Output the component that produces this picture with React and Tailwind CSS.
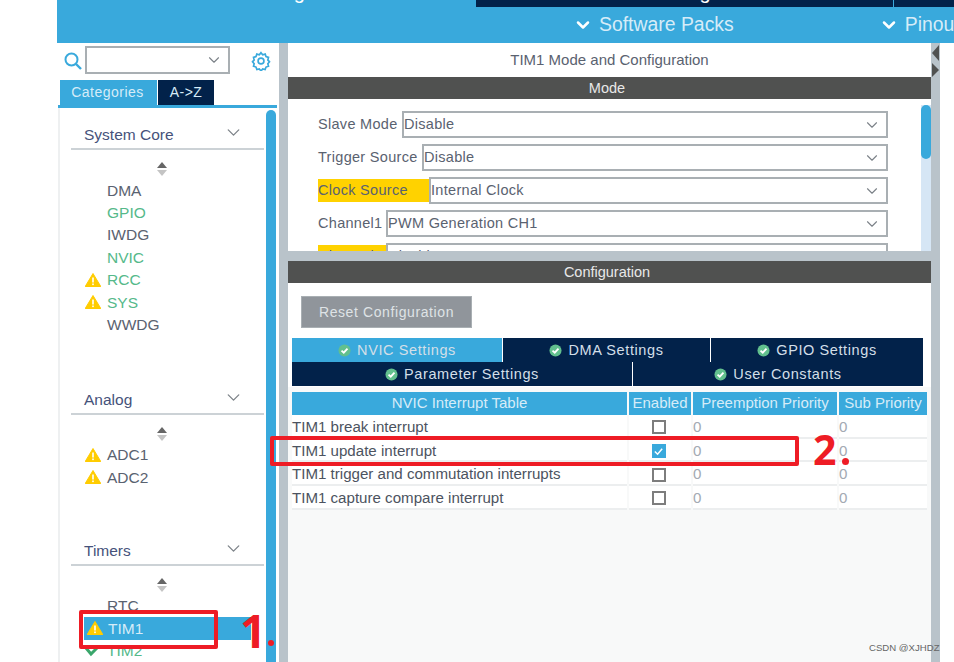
import React from "react";
import { ChevronDown } from "lucide-react";

const Warn = ({ className = "" }) => (
  <svg viewBox="0 0 16 14" className={`w-4 h-[14px] shrink-0 ${className}`}>
    <path d="M8 0.5 L15.8 13.5 L0.2 13.5 Z" fill="#ffcc00" stroke="#ffcc00" strokeLinejoin="round" />
    <rect x="7.2" y="4.5" width="1.6" height="5" fill="#fff" />
    <rect x="7.2" y="10.5" width="1.6" height="1.6" fill="#fff" />
  </svg>
);

const GreenCheck = () => (
  <svg viewBox="0 0 14 14" className="w-[13px] h-[13px] shrink-0">
    <circle cx="7" cy="7" r="6.5" fill="#62c08e" />
    <path d="M3.8 7.2 L6.2 9.4 L10.2 5" fill="none" stroke="#fff" strokeWidth="2" />
  </svg>
);

const Sorter = () => (
  <svg viewBox="0 0 10 14" className="w-[10px] h-[14px] mx-auto">
    <path d="M5 0 L10 6 L0 6 Z" fill="#666" />
    <path d="M5 14 L10 8 L0 8 Z" fill="#c4c4c4" />
  </svg>
);

const Item = ({ label, warn, green }) => (
  <div className={`h-[22.4px] flex items-center text-[15.5px] ${green ? "text-[#55b98a]" : "text-[#5a6270]"}`}>
    <div className="w-[23px] pl-[1px]">{warn && <Warn />}</div>
    {label}
  </div>
);

const Group = ({ title, className = "", children }) => (
  <div className={className}>
    <div className="h-[29px] flex items-center justify-between pl-[13px] pr-[20px] pt-[1px] border-b-2 border-[#ccd2d6] text-[15.5px] text-[#46527a]">
      {title}
      <ChevronDown className="w-[21px] h-[21px] text-[#7c8288] -mt-[5px]" strokeWidth={1.5} />
    </div>
    <div className="pt-[12px] pl-[13px] pr-[25px]">
      <Sorter />
      <div className="pt-[3px]">{children}</div>
    </div>
  </div>
);

const Sidebar = () => (
  <div className="w-[222px] shrink-0 h-full flex flex-col overflow-hidden">
    <div className="h-[37px] pt-[3px] flex items-start pl-[7px] relative">
      <svg viewBox="0 0 18 18" className="w-[18px] h-[18px] mt-[6px] shrink-0">
        <circle cx="7.5" cy="7.5" r="6" fill="none" stroke="#39a9dc" strokeWidth="2" />
        <path d="M12 12 L17 17" stroke="#39a9dc" strokeWidth="2.4" />
      </svg>
      <div className="ml-[3px] w-[145px] h-[28px] border-2 border-[#a9afb3] flex items-center justify-end pr-[5px]">
        <ChevronDown className="w-[18px] h-[18px] text-[#7c8288]" strokeWidth={1.5} />
      </div>
      <svg viewBox="0 0 24 24" className="w-[20px] h-[20px] ml-[21px] mt-[5px] shrink-0" fill="none" stroke="#39a9dc" strokeWidth="2">
        <circle cx="12" cy="12" r="3.5" />
        <path d="M12 2 l2 2.5 3-.8 1 3 3 1-.8 3 2 2.3-2 2.3.8 3-3 1-1 3-3-.8-2 2.5-2-2.5-3 .8-1-3-3-1 .8-3-2-2.3 2-2.3-.8-3 3-1 1-3 3 .8z" />
      </svg>
    </div>
    <div className="h-[25px] flex pl-[3px] gap-[1px] text-[14px] tracking-[0.5px] text-[#d6ecf8]">
      <div className="w-[97px] pr-[2px] bg-[#39a9dc] flex items-center justify-center">Categories</div>
      <div className="w-[56px] bg-[#02224a] flex items-center justify-center">A-&gt;Z</div>
    </div>
    <div className="h-[3px] ml-[1px] mr-[2px] bg-[#39a9dc] shrink-0" />
    <div className="flex-1 flex ml-[1px] border-l-2 border-[#eef0f1] min-h-0">
      <div className="w-[205px] pl-[11px] pr-[1px] pt-[13px] shrink-0">
        <Group title="System Core">
          <Item label="DMA" />
          <Item label="GPIO" green />
          <Item label="IWDG" />
          <Item label="NVIC" green />
          <Item label="RCC" warn green />
          <Item label="SYS" warn green />
          <Item label="WWDG" />
        </Group>
        <Group title="Analog" className="mt-[50px]">
          <Item label="ADC1" warn />
          <Item label="ADC2" warn />
        </Group>
        <Group title="Timers" className="mt-[48px]">
          <Item label="RTC" />
          <div className="h-[23px] -mr-[12px] bg-[#39a9dc] flex items-center text-[15.5px] text-[#d6ecf8]">
            <div className="w-[24px] pl-[3px]"><Warn /></div>
            TIM1
          </div>
          <div className="h-[22px] flex items-center text-[15.5px] text-[#55b98a]">
            <div className="w-[23px]">
              <svg viewBox="0 0 16 12" className="w-4 h-3"><path d="M2 3 L7 9 L14 2" fill="none" stroke="#3aa66b" strokeWidth="3" /></svg>
            </div>
            TIM2
          </div>
        </Group>
      </div>
      <div className="w-[10px] ml-[1px] mt-[2px] bg-[#39a9dc] rounded-t-[5px]" />
    </div>
  </div>
);

const Field = ({ label, value, width, highlight }) => (
  <div className="h-[27px] flex items-center mb-[6px] text-[14.5px] text-[#5a6270] tracking-[0.3px]">
    <div className={`h-[23px] flex items-center whitespace-nowrap ${highlight ? "bg-[#ffd200]" : ""}`} style={{ width }}>
      {label}
    </div>
    <div className="flex-1 h-[27px] border-2 border-[#a9afb3] flex items-center justify-between pr-[5px] bg-white">
      <span className="truncate">{value}</span>
      <ChevronDown className="w-[18px] h-[18px] text-[#7c8288]" strokeWidth={1.5} />
    </div>
  </div>
);

const DarkBar = ({ children }) => (
  <div className="h-[22px] shrink-0 bg-[#505150] text-[#e8e8e8] text-[14.5px] pr-[5px] pt-[1px] flex items-center justify-center">
    {children}
  </div>
);

const Tab = ({ label, width, active, grow }) => (
  <div
    className={`h-full pt-[1px] flex items-center justify-center gap-[6px] text-[14.5px] tracking-[0.6px] border-r border-white text-[#d3dfe8] ${active ? "bg-[#39a9dc]" : "bg-[#02224a]"} ${grow ? "flex-1" : ""}`}
    style={{ width }}
  >
    <GreenCheck />
    {label}
  </div>
);

const rows = [
  { name: "TIM1 break interrupt" },
  { name: "TIM1 update interrupt", checked: true },
  { name: "TIM1 trigger and commutation interrupts" },
  { name: "TIM1 capture compare interrupt" },
];

const HeadCell = ({ children }) => (
  <div className="h-[23px] bg-[#39a9dc] text-[#d6ecf8] text-[15px] flex items-center justify-center whitespace-nowrap">
    {children}
  </div>
);

const cell = "h-[23.7px] pt-[3px] bg-white border-b-2 border-[#eceeef] flex items-center text-[15.1px]";

const InterruptTable = () => (
  <div className="grid grid-cols-[335px_62px_144px_88px] gap-x-[2px]">
    <HeadCell>NVIC Interrupt Table</HeadCell>
    <HeadCell>Enabled</HeadCell>
    <HeadCell>Preemption Priority</HeadCell>
    <HeadCell>Sub Priority</HeadCell>
    {rows.map((r) => (
      <React.Fragment key={r.name}>
        <div className={`${cell} text-[#4c5360] whitespace-nowrap`}>{r.name}</div>
        <div className={`${cell} justify-center pr-[3px]`}>
          {r.checked ? (
            <div className="w-[14px] h-[14px] bg-[#39a9dc] flex items-center justify-center">
              <svg viewBox="0 0 12 12" className="w-[11px] h-[11px]"><path d="M2 6 L5 9 L10 3" fill="none" stroke="#fff" strokeWidth="1.6" /></svg>
            </div>
          ) : (
            <div className="w-[14px] h-[14px] border-2 border-[#7d7d7d]" />
          )}
        </div>
        <div className={`${cell} text-[#a3aab3]`}>0</div>
        <div className={`${cell} text-[#a3aab3]`}>0</div>
      </React.Fragment>
    ))}
  </div>
);

const Main = () => (
  <div className="w-[643px] shrink-0 h-full flex flex-col bg-white">
    <div className="h-[34px] shrink-0 pt-[1px] flex items-center justify-center text-[15px] text-[#5a6270]">
      TIM1 Mode and Configuration
    </div>
    <DarkBar>Mode</DarkBar>
    <div className="h-[152px] shrink-0 flex overflow-hidden">
      <div className="flex-1 pl-[30px] pr-[33px] pt-[12px]">
        <Field label="Slave Mode" value="Disable" width="84px" />
        <Field label="Trigger Source" value="Disable" width="104px" />
        <Field label="Clock Source" value="Internal Clock" width="111px" highlight />
        <Field label="Channel1" value="PWM Generation CH1" width="68px" />
        <Field label="Channel2" value="Disable" width="68px" highlight />
      </div>
      <div className="w-[10px] mt-[6px] bg-[#d6e6f5]">
        <div className="h-[54px] bg-[#39a9dc] rounded-[5px]" />
      </div>
    </div>
    <div className="h-[10px] shrink-0 bg-[#b9c3ca]" />
    <DarkBar>Configuration</DarkBar>
    <div className="flex-1 flex flex-col bg-white">
      <div className="ml-[13px] mt-[13px] w-[171px] h-[32px] pt-[1px] bg-[#90959b] border border-[#a9afb3] text-[#dfe3e6] text-[14px] tracking-[0.6px] flex items-center justify-center">
        Reset Configuration
      </div>
      <div className="ml-[4px] mt-[10px] w-[632px]">
        <div className="h-[24px] flex">
          <Tab label="NVIC Settings" width="211px" active />
          <Tab label="DMA Settings" width="208px" />
          <Tab label="GPIO Settings" grow />
        </div>
        <div className="h-[24px] flex">
          <Tab label="Parameter Settings" width="341px" />
          <Tab label="User Constants" grow />
        </div>
      </div>
      <div className="flex-1 mt-[1px] pt-[5px] pl-[4px] bg-[#f8f9f9]">
        <InterruptTable />
      </div>
    </div>
  </div>
);

export default function App() {
  return (
    <div className="relative w-[954px] h-[662px] overflow-hidden bg-white font-['Liberation_Sans',Arial,sans-serif]">
      <div className="ml-[57px] h-[43px] bg-[#39a9dc] flex flex-col text-white overflow-hidden">
        <div className="h-[7px] flex shrink-0">
          <div className="w-[418px] overflow-hidden flex items-end justify-center pb-[5px] text-[20px] leading-[20px] whitespace-nowrap">
            Pinout &amp; Configuration
          </div>
          <div className="w-[417px] ml-[1px] bg-[#02224a] overflow-hidden flex items-end justify-center pb-[5px] text-[20px] leading-[20px] whitespace-nowrap">
            Clock Configuration
          </div>
          <div className="flex-1 ml-[1px] bg-[#02224a]" />
        </div>
        <div className="flex-1 flex items-center text-[19.4px] text-[#d6ecf8] whitespace-nowrap">
          <ChevronDown className="w-[20px] h-[20px] ml-[516px] shrink-0 text-white" strokeWidth={3} />
          <span className="ml-[6px] shrink-0">Software Packs</span>
          <ChevronDown className="w-[20px] h-[20px] ml-[145px] shrink-0 text-white" strokeWidth={3} />
          <span className="ml-[6px] shrink-0">Pinout</span>
        </div>
      </div>
      <div className="ml-[57px] h-[619px] flex">
        <Sidebar />
        <div className="w-[9px] shrink-0 bg-[#b9c3ca]" />
        <Main />
        <div className="w-[9px] shrink-0 bg-[#b9c3ca] relative">
          <svg viewBox="0 0 9 34" className="absolute top-[1px] left-0 w-[9px] h-[34px]">
            <path d="M8 1 L1 9 L8 17 Z" fill="#505150" />
            <path d="M1 19 L8 26 L1 33 Z" fill="#505150" />
          </svg>
        </div>
      </div>

      {/* red annotations */}
      <div className="absolute left-[79px] top-[610px] w-[139px] h-[39px] border-4 border-[#ee1c25] rounded-[2px]" />
      <div className="absolute left-[270px] top-[436px] w-[529px] h-[30px] border-4 border-[#ee1c25] rounded-[2px]" />
      <div className="absolute left-[240px] top-[604px] text-[46px] leading-[52px] font-bold text-[#ee1c25] font-['Open_Sans',sans-serif]">1</div>
      <div className="absolute left-[268px] top-[640px] w-[6px] h-[6px] rounded-full bg-[#ee1c25]" />
      <div className="absolute left-[813px] top-[425px] text-[41px] leading-[48px] font-bold text-[#ee1c25] font-['Open_Sans',sans-serif]">2</div>
      <div className="absolute left-[842px] top-[458px] w-[7px] h-[7px] rounded-full bg-[#ee1c25]" />

      <div className="absolute left-[869px] top-[642px] text-[9.6px] leading-[12px] text-[#666]">CSDN @XJHDZ</div>
    </div>
  );
}
